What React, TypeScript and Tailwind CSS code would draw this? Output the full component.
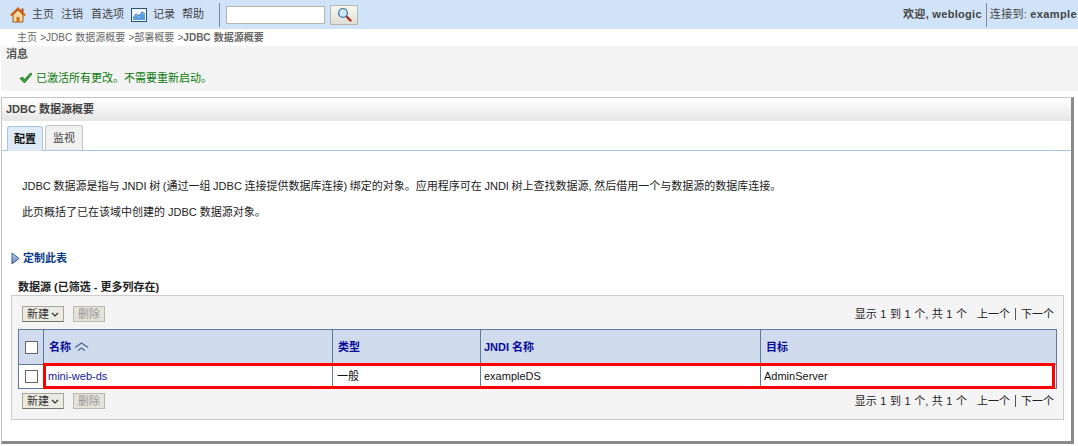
const font = "font-['Liberation_Sans','Noto_Sans_CJK_SC',sans-serif]";

function HomeIcon() {
  return (
    <svg width="16" height="16" viewBox="0 0 16 16" className="shrink-0">
      <rect x="11.5" y="1.5" width="2" height="4" fill="#8a4a1c" />
      <path d="M3 8v7h10V8L8 3z" fill="#f6d9a0" stroke="#9a5a20" />
      <rect x="6.5" y="10" width="3" height="5" fill="#c9701f" />
      <path d="M0.8 8.5L8 1.5l7.2 7" fill="none" stroke="#d8641a" strokeWidth="2" />
    </svg>
  );
}

function ChartIcon() {
  return (
    <svg width="16" height="14" viewBox="0 0 16 14" className="block shrink-0">
      <rect x="0.5" y="0.5" width="15" height="13" fill="#eef4fb" stroke="#2f4f78" />
      <path d="M2 11l3-4 3 2 3-4 3 2v5H2z" fill="#5b9be0" />
      <path d="M2 10l3-4 3 2 3-4 3 2" fill="none" stroke="#2a6cc0" />
    </svg>
  );
}

function MagnifierIcon() {
  return (
    <svg width="15" height="15" viewBox="0 0 15 15">
      <path d="M9.5 9.5l4 4" stroke="#a52a20" strokeWidth="2.4" strokeLinecap="round" />
      <circle cx="6" cy="6" r="4.4" fill="#cfe6f7" stroke="#4d7fa8" strokeWidth="1.4" />
    </svg>
  );
}

function CheckIcon() {
  return (
    <svg width="14" height="12" viewBox="0 0 14 12" className="shrink-0">
      <path d="M1 6.5l2.5-1.5 2 2.5L11.5 1 13 2 5.5 11z" fill="#3aa63a" stroke="#1b6e1b" strokeWidth="0.8" />
    </svg>
  );
}

function ActionRow() {
  return (
    <div className="flex items-center justify-between h-4">
      <div className="flex items-center ml-[4px]">
        <button className="w-[42px] h-4 flex items-center justify-center gap-[2px] border border-[#a5a598] border-b-[#77776c] bg-[#ecebe2] text-[11px] text-[#333]">
          新建
          <svg width="8" height="5" viewBox="0 0 8 5"><path d="M1 1l3 3 3-3" fill="none" stroke="#333" strokeWidth="1.2" /></svg>
        </button>
        <button className="ml-[9px] w-[32px] h-4 flex items-center justify-center border border-[#b9b9ae] bg-[#e4e3da] text-[11px] text-[#999]">
          删除
        </button>
      </div>
      <div className="flex items-center text-[11px] text-[#222] pr-[3px]">
        <span className="[word-spacing:0.5px]">显示 1 到 1 个, 共 1 个</span>
        <span className="ml-[10px]">上一个</span>
        <span className="mx-[5px] w-px h-3 bg-[#555]" />
        <span>下一个</span>
      </div>
    </div>
  );
}

export default function App() {
  const headCell = "border-l border-[#5f7a9c] px-[5px] font-bold text-[#0a0a9a] text-[11px] flex items-center";
  const bodyCell = "border-l border-[#5f7a9c] px-[3px] text-[11px] text-[#111] flex items-center";

  return (
    <div className={`w-[1078px] h-[446px] overflow-hidden bg-white text-[11px] ${font}`}>
      {/* top bar */}
      <div className="h-[29px] bg-[#d0e3f8] flex items-center pl-[10px] pr-px text-[#444]">
        <HomeIcon />
        <span className="ml-[6px]">主页</span>
        <span className="ml-[7px]">注销</span>
        <span className="ml-[8px]">首选项</span>
        <span className="ml-[7px]"><ChartIcon /></span>
        <span className="ml-[6px]">记录</span>
        <span className="ml-[7px]">帮助</span>
        <span className="ml-[15px] w-px h-[24px] bg-[#7d8a99]" />
        <input className="ml-[6px] w-[99px] h-[18px] bg-white border border-[#b5b5ac]" />
        <button className="ml-[5px] w-[28px] h-[20px] flex items-center justify-center bg-gradient-to-b from-[#f7f7f2] to-[#e0dfd6] border border-[#b5b5ac]">
          <MagnifierIcon />
        </button>
        <div className="ml-auto flex items-center whitespace-nowrap">
          <b className="text-[#444] tracking-[0.3px]">欢迎, weblogic</b>
          <span className="ml-[4px] w-px h-[24px] bg-[#7d8a99]" />
          <span className="ml-[3px]"><span className="tracking-[0.3px]">连接到:</span> <b className="tracking-[0.4px]">example</b></span>
        </div>
      </div>

      {/* breadcrumb */}
      <div className="h-[17px] pl-[17px] flex items-center text-[#666] text-[10px] [word-spacing:0.4px]">
        主页 &gt;JDBC 数据源概要 &gt;部署概要 &gt;<b>JDBC 数据源概要</b>
      </div>

      {/* messages */}
      <div className="ml-px h-[45px] bg-[#f4f4f4] pl-[5px] text-[#555]">
        <b className="block leading-[16px]">消息</b>
        <div className="mt-[8px] pl-[13px] flex items-center gap-[3px] text-[#0a7a0a]">
          <CheckIcon />
          已激活所有更改。不需要重新启动。
        </div>
      </div>

      {/* main panel */}
      <div className="mt-[6px] ml-px w-[1073px] h-[347px] border border-[#c4c4c4] border-r-[3px] border-b-[3px] border-r-[#8a8a8a] border-b-[#8a8a8a] bg-white">
        <div className="h-[23px] flex items-center pl-[4px] font-bold text-[#444] bg-gradient-to-b from-white to-[#e6e6e6]">
          JDBC 数据源概要
        </div>

        <div className="mt-[4px] h-[26px] flex items-end pl-[5px] gap-[2px] border-b border-[#a9c4de]">
          <div className="w-[36px] h-[25px] -mb-px flex items-center justify-center font-bold text-[#111] bg-[#deebf6] border border-b-0 border-[#a9c4de] rounded-t-[3px]">
            配置
          </div>
          <div className="w-[38px] h-[25px] flex items-center justify-center text-[#444] bg-[#f1f1f1] border border-b-0 border-[#c4c4c4] rounded-t-[3px]">
            监视
          </div>
        </div>

        <p className="mt-[28px] pl-[20px] leading-[14px] text-[#222] [word-spacing:-0.4px]">
          JDBC 数据源是指与 JNDI 树 (通过一组 JDBC 连接提供数据库连接) 绑定的对象。应用程序可在 JNDI 树上查找数据源, 然后借用一个与数据源的数据库连接。
        </p>
        <p className="mt-[12px] pl-[20px] leading-[14px] text-[#222]">此页概括了已在该域中创建的 JDBC 数据源对象。</p>

        <div className="mt-[32px] pl-[9px] flex items-center gap-[3px] font-bold text-[#0a3a8a] h-[14px]">
          <svg width="9" height="13" viewBox="0 0 9 13">
            <defs>
              <linearGradient id="customizeArrow" x1="0" y1="0" x2="0" y2="1">
                <stop offset="0%" stopColor="#c4d6ee" />
                <stop offset="100%" stopColor="#5f82b8" />
              </linearGradient>
            </defs>
            <path d="M1 1l7 5.5L1 12z" fill="url(#customizeArrow)" stroke="#3c5f96" />
          </svg>
          定制此表
        </div>

        <div className="mt-[15px] pl-[16px] font-bold text-[#222] leading-[14px]">数据源 (已筛选 - 更多列存在)</div>

        <div className="mt-[1px] ml-[9px] w-[1053px] h-[125px] border border-[#cccccc] bg-[#f4f4f4] pl-[6px] pr-[6px] pt-[10px]">
          <ActionRow />
          <div className="relative mt-[7px] border border-[#5f7a9c] border-b-0">
            <div className="grid grid-cols-[24px_289px_148px_280px_1fr] h-[34px] bg-[#d0dcee]">
              <div className="flex items-center justify-center">
                <span className="block w-[13px] h-[13px] border border-[#666] bg-white" />
              </div>
              <div className={headCell}>
                名称
                <svg className="ml-[3px]" width="15" height="10" viewBox="0 0 15 10"><path d="M1 5.5l6.5-4.5 6.5 4.5M4 8.5l3.5-2.5 3.5 2.5" fill="none" stroke="#4f6a8f" strokeWidth="1.4" /></svg>
              </div>
              <div className={headCell}>类型</div>
              <div className={`${headCell} !pl-[3px]`}>JNDI 名称</div>
              <div className={headCell}>目标</div>
            </div>
            <div className="grid grid-cols-[24px_289px_148px_280px_1fr] h-[25px] bg-white border-t border-b border-[#5f7a9c]">
              <div className="flex items-center justify-center">
                <span className="block w-[13px] h-[13px] border border-[#666] bg-white" />
              </div>
              <div className={`${bodyCell} !pl-[4px] !text-[#14209a]`}>mini-web-ds</div>
              <div className={`${bodyCell} !pl-[4px]`}>一般</div>
              <div className={bodyCell}>exampleDS</div>
              <div className={bodyCell}>AdminServer</div>
            </div>
            {/* red highlight drawn over the row */}
            <div className="absolute left-[24px] right-[1px] top-[33px] h-[26px] border-[3px] border-[#ff0000] pointer-events-none" />
          </div>
          <div className="mt-[4px]">
            <ActionRow />
          </div>
        </div>
      </div>
    </div>
  );
}
